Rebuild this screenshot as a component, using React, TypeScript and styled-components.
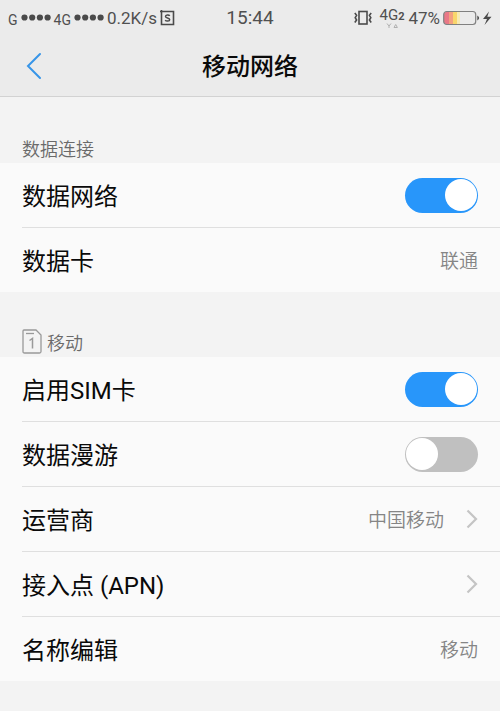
import React from "react";
import styled, { createGlobalStyle } from "styled-components";

const GlobalStyle = createGlobalStyle`
  * { box-sizing: border-box; }
  body {
    margin: 0;
    background: #f3f3f3;
    color: #0a0a0a;
    font-family: Roboto, "Noto Sans CJK SC", sans-serif;
  }
`;

const Header = styled.header`
  background: #ebebeb;
  border-bottom: 1px solid #d2d2d2;
`;

const StatusBar = styled.div`
  display: grid;
  grid-template-columns: 1fr auto 1fr;
  align-items: center;
  height: 36px;
  padding: 0 8px;
  color: #505050;
  font-size: 17px;
  line-height: 20px;
`;

const StatusGroup = styled.div<{ $end?: boolean }>`
  display: flex;
  align-items: center;
  justify-content: ${(p) => (p.$end ? "flex-end" : "flex-start")};
  gap: 3px;
  white-space: nowrap;
`;

const Clock = styled.time`
  font-size: 19px;
`;

const Carrier = styled.span`
  font-size: 14px;
  line-height: 16px;
  padding-top: 3px;
`;

const Network = styled.span`
  display: flex;
  align-items: center;
  font-size: 15px;
  line-height: 15px;
`;

const SlotNumber = styled.b`
  font-size: 11px;
  line-height: 12px;
  padding-top: 3px;
`;

const NetworkColumn = styled.span`
  display: flex;
  flex-direction: column;
  align-items: center;
  margin: 0 1px 0 4px;
`;

const TitleBar = styled.div`
  display: grid;
  grid-template-columns: 48px 1fr 48px;
  align-items: center;
  height: 60px;
  padding: 0 10px;
`;

const BackButton = styled.button`
  display: flex;
  align-items: center;
  justify-content: center;
  height: 48px;
  padding: 0;
  border: 0;
  background: none;
`;

const Title = styled.h1`
  margin: 0;
  padding-top: 2px;
  text-align: center;
  font-size: 24px;
  line-height: 36px;
  font-weight: 500;
`;

const Main = styled.main`
  padding-top: 1px;
`;

const SectionTitle = styled.h2`
  display: flex;
  align-items: center;
  gap: 5px;
  height: 65px;
  margin: 0;
  padding: 34px 22px 0;
  color: #6a6a6a;
  font-size: 18px;
  line-height: 28px;
  font-weight: 350;
`;

const List = styled.ul`
  margin: 0;
  padding: 0;
  list-style: none;
  background: #fafafa;
`;

const Item = styled.li`
  margin-left: 22px;
  & + & { border-top: 1px solid #dfdfdf; }
`;

const Row = styled.div`
  display: flex;
  align-items: center;
  justify-content: space-between;
  width: 100%;
  height: 64px;
  padding: 0 22px 0 0;
  border: 0;
  background: none;
  color: inherit;
  font: inherit;
  font-size: 24px;
  line-height: 36px;
  text-align: left;
`;

const Text = styled.span`
  padding-top: 4px;
`;

const Value = styled.span`
  display: flex;
  align-items: center;
  gap: 22px;
  color: #858585;
  font-size: 19px;
  font-weight: 350;
  line-height: 28px;
`;

const Switch = styled.input`
  appearance: none;
  display: flex;
  align-items: center;
  width: 73px;
  height: 35px;
  margin: 0;
  padding: 0 1px;
  border-radius: 18px;
  background: #c0c0c0;
  cursor: pointer;

  &::before {
    content: "";
    width: 32px;
    height: 32px;
    border-radius: 50%;
    background: #fff;
  }
  &:checked {
    justify-content: flex-end;
    background: #2896fa;
  }
`;

const SignalDots = () => (
  <svg width="30" height="8" viewBox="0 0 30 8" fill="#4a4a4a" aria-hidden="true">
    <circle cx="3.5" cy="3.5" r="3.1" />
    <circle cx="11.2" cy="3.5" r="3.1" />
    <circle cx="18.9" cy="3.5" r="3.1" />
    <circle cx="26.6" cy="3.5" r="3.1" />
  </svg>
);

const ScreenIcon = () => (
  <svg width="15" height="16" viewBox="0 0 15 16" fill="none" stroke="#4a4a4a" aria-hidden="true">
    <path d="M0 1.5H13.5V14.5H1.5V0" strokeWidth="1.6" />
    <path d="M9.7 5.9C9 4.7 5.5 4.8 5.5 6.5C5.5 8.5 9.7 7.5 9.7 9.7C9.7 11.5 6 11.4 5.2 10.2" strokeWidth="1.5" />
  </svg>
);

const VibrateIcon = () => (
  <svg width="18" height="16" viewBox="0 0 18 16" fill="none" stroke="#4a4a4a" aria-hidden="true">
    <rect x="5" y="1.5" width="8" height="12.5" strokeWidth="1.6" />
    <path d="M.8 3L2.6 5.3L1.2 7.7L2.6 10L.8 12.5M17.2 3L15.4 5.3L16.8 7.7L15.4 10L17.2 12.5" strokeWidth="1.6" />
  </svg>
);

const ActivityIcon = () => (
  <svg width="12" height="5" viewBox="0 0 12 5" fill="none" stroke="#b0b0b0" aria-hidden="true">
    <path d="M1 .5L3 3L5 .5M3 3V5M8 4.5L9.7 1.5L11.4 4.5Z" />
  </svg>
);

const BatteryIcon = () => (
  <svg width="49" height="16" viewBox="1 0 49 16" aria-hidden="true">
    <rect x="2" y="2" width="7" height="12" rx="2" fill="#e97887" />
    <rect x="7" y="2" width="4" height="12" fill="#f3a080" />
    <rect x="11" y="2" width="4" height="12" fill="#f9d66b" />
    <rect x="15" y="2" width="3" height="12" fill="#f6e9b4" />
    <rect x="1.7" y="1.5" width="32" height="13" rx="3" fill="none" stroke="#808080" strokeWidth="1.2" />
    <path d="M35.3 5.5Q39 8 35.3 10.5Z" fill="#4a4a4a" />
    <path d="M47 1.5L41 9H45L42.5 15L49.5 6.7H45.3Z" fill="#4a4a4a" />
  </svg>
);

const BackIcon = () => (
  <svg width="16" height="28" viewBox="0 0 16 28" fill="none" stroke="#3795e8" aria-hidden="true">
    <path d="M14 2L2 14L14 26" strokeWidth="2" strokeLinecap="round" />
  </svg>
);

const SimIcon = () => (
  <svg width="20" height="25" viewBox="0 0 20 25" fill="none" stroke="#999" aria-hidden="true">
    <path d="M2 1H14L19 6V22.5Q19 24 17.5 24H2.5Q1 24 1 22.5V2Q1 1 2 1Z" strokeWidth="1.3" />
    <path d="M4 4.5H12" strokeWidth="1.3" />
    <path d="M7.5 11.5L10.5 9.5V19.5" strokeWidth="1.5" />
  </svg>
);

const ChevronIcon = () => (
  <svg width="12" height="20" viewBox="0 0 12 20" fill="none" stroke="#c4c4c4" aria-hidden="true">
    <path d="M1.5 1.5L10 10L1.5 18.5" strokeWidth="2.2" />
  </svg>
);

type ToggleRowProps = { id: string; label: string; on?: boolean };

const ToggleRow = ({ id, label, on }: ToggleRowProps) => (
  <Item>
    <Row>
      <Text as="label" htmlFor={id}>{label}</Text>
      <Switch id={id} type="checkbox" role="switch" defaultChecked={on} />
    </Row>
  </Item>
);

type ValueRowProps = { label: string; value?: string; link?: boolean };

const ValueRow = ({ label, value, link }: ValueRowProps) => (
  <Item>
    <Row as="button" type="button">
      <Text>{label}</Text>
      <Value>
        {value && <Text>{value}</Text>}
        {link && <ChevronIcon />}
      </Value>
    </Row>
  </Item>
);

export default function App() {
  return (
    <>
      <GlobalStyle />
      <Header>
        <StatusBar>
          <StatusGroup>
            <Carrier>G</Carrier>
            <SignalDots />
            <Carrier>4G</Carrier>
            <SignalDots />
            <span>0.2K/s</span>
            <ScreenIcon />
          </StatusGroup>
          <Clock>15:44</Clock>
          <StatusGroup $end>
            <VibrateIcon />
            <NetworkColumn>
              <Network>
                4G<SlotNumber>2</SlotNumber>
              </Network>
              <ActivityIcon />
            </NetworkColumn>
            <span>47%</span>
            <BatteryIcon />
          </StatusGroup>
        </StatusBar>
        <TitleBar>
          <BackButton type="button" aria-label="返回">
            <BackIcon />
          </BackButton>
          <Title>移动网络</Title>
        </TitleBar>
      </Header>
      <Main>
        <section>
          <SectionTitle><Text>数据连接</Text></SectionTitle>
          <List>
            <ToggleRow id="data" label="数据网络" on />
            <ValueRow label="数据卡" value="联通" />
          </List>
        </section>
        <section>
          <SectionTitle>
            <SimIcon />
            <Text>移动</Text>
          </SectionTitle>
          <List>
            <ToggleRow id="sim" label="启用SIM卡" on />
            <ToggleRow id="roaming" label="数据漫游" />
            <ValueRow label="运营商" value="中国移动" link />
            <ValueRow label="接入点 (APN)" link />
            <ValueRow label="名称编辑" value="移动" />
          </List>
        </section>
      </Main>
    </>
  );
}
